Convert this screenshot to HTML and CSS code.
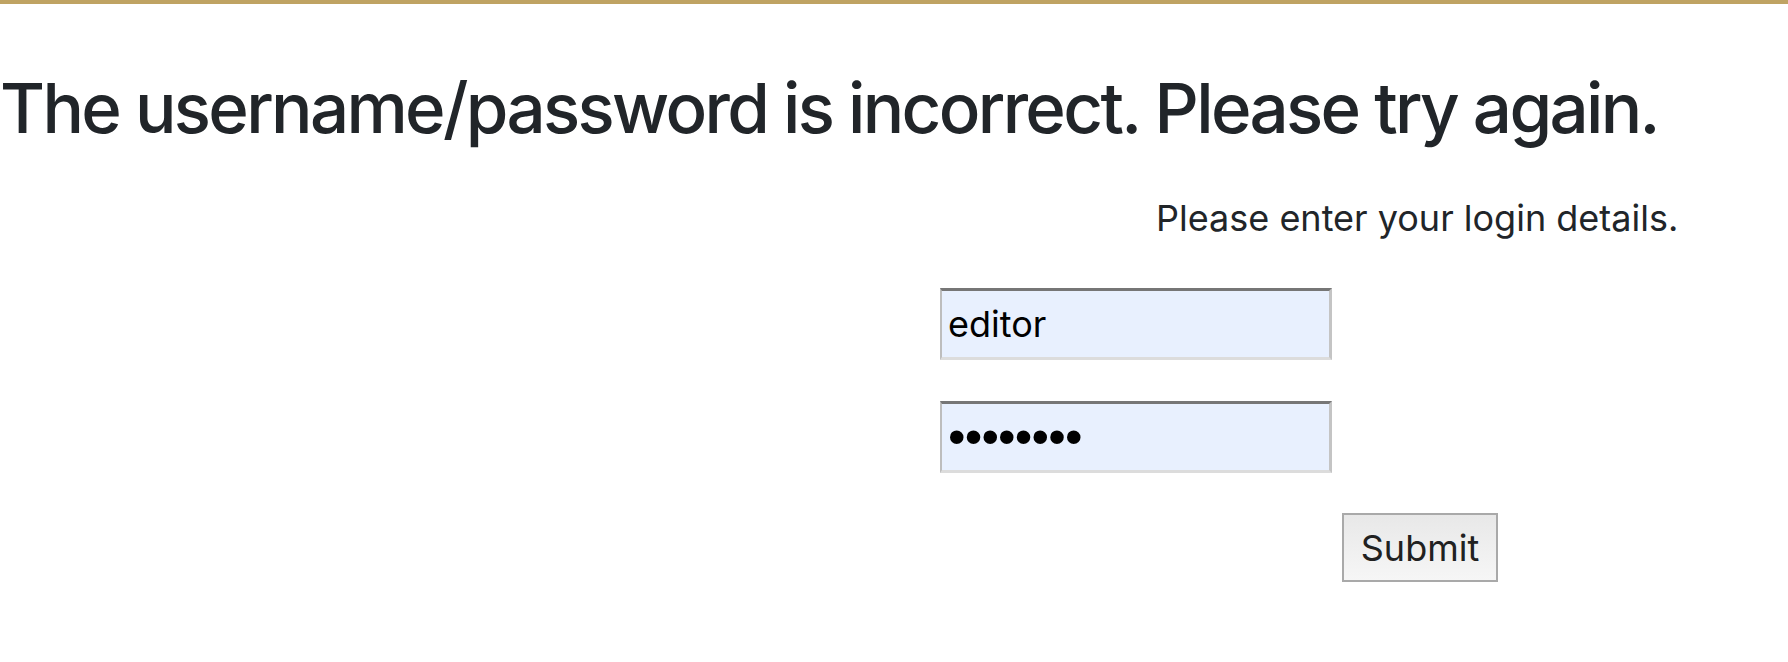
FILE: index.html
```html
<!DOCTYPE html>
<html lang="en">
<head>
<meta charset="utf-8">
<title>Login</title>
<link rel="stylesheet" href="styles.css">
</head>
<body>
<div class="topbar"></div>
<main class="page">
  <h1 class="error">The username/password is incorrect. Please try again.</h1>
  <form class="login">
    <p class="intro">Please enter your login details.</p>
    <div class="field"><input class="text-input" type="text" value="editor"></div>
    <div class="field"><input class="text-input secret" type="password" value="password"></div>
    <div class="actions"><button class="submit" type="button">Submit</button></div>
  </form>
</main>
</body>
</html>
```
FILE: styles.css
```css
html, body {
  margin: 0;
  padding: 0;
  background: #ffffff;
}
body {
  font-family: Inter, "Noto Sans", "Liberation Sans", sans-serif;
  color: #212529;
}
.topbar {
  height: 4px;
  background: #bfa363;
}
.page {
  display: flex;
  flex-direction: column;
}
.error {
  margin: 62px 0 0 0;
  font-size: 69px;
  font-weight: 500;
  line-height: 84px;
  letter-spacing: -2.65px;
}
.login {
  display: flex;
  flex-direction: column;
  align-items: flex-start;
  margin-left: 940px;
}
.intro {
  margin: 48px 0 0 216px;
  font-size: 36px;
  line-height: 40px;
}
.login .field:first-of-type {
  margin-top: 50px;
}
.field + .field {
  margin-top: 41px;
}
.text-input {
  box-sizing: border-box;
  width: 392px;
  height: 72px;
  margin: 0;
  padding: 0 6px;
  font-family: Inter, "Noto Sans", "Liberation Sans", sans-serif;
  font-size: 36px;
  color: #000;
  background: #e8f0fe;
  border-style: solid;
  border-width: 3px 3px 3px 2px;
  border-color: #767676 #c4c4c4 #dcdcdc #bdbdbd;
  outline: none;
}
.secret {
  font-family: "Liberation Sans", Arial, sans-serif;
  font-size: 50px;
  letter-spacing: -0.8px;
}
.actions {
  margin: 40px 0 0 402px;
}
.submit {
  box-sizing: border-box;
  width: 156px;
  height: 69px;
  padding: 0;
  font-family: Inter, "Noto Sans", "Liberation Sans", sans-serif;
  font-size: 36px;
  color: #212121;
  background: linear-gradient(#e8e8e8, #f6f6f6);
  border: 2px solid #a9a9a9;
  border-radius: 0;
}
```
